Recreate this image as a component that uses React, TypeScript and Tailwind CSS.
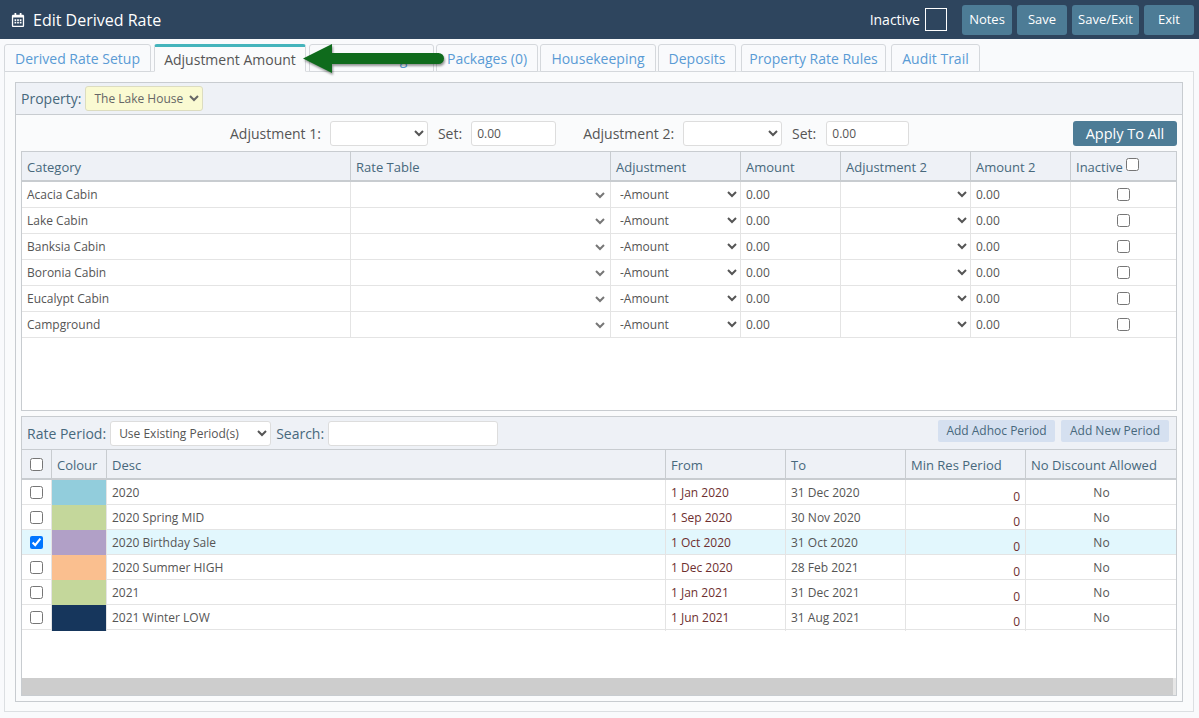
import { FaRegCalendarAlt } from "react-icons/fa";

const FONT = "font-['Open_Sans',sans-serif]";

const tabs = [
  { label: "Derived Rate Setup", cls: "w-[147px]" },
  { label: "Adjustment Amount", cls: "ml-[3px] w-[152px]", active: true },
  { label: "Rate Settings", cls: "ml-[3px] w-[125px]" },
  { label: "Packages (0)", cls: "ml-[2px] w-[102px]" },
  { label: "Housekeeping", cls: "ml-[2px] w-[116px]" },
  { label: "Deposits", cls: "ml-[2px] w-[78px]" },
  { label: "Property Rate Rules", cls: "ml-[5px] w-[145px]" },
  { label: "Audit Trail", cls: "ml-[5px] w-[89px]" },
];

const categories = ["Acacia Cabin", "Lake Cabin", "Banksia Cabin", "Boronia Cabin", "Eucalypt Cabin", "Campground"];

const periods = [
  { desc: "2020", colour: "bg-[#92cddc]", from: "1 Jan 2020", to: "31 Dec 2020" },
  { desc: "2020 Spring MID", colour: "bg-[#c4d79b]", from: "1 Sep 2020", to: "30 Nov 2020" },
  { desc: "2020 Birthday Sale", colour: "bg-[#b1a0c7]", from: "1 Oct 2020", to: "31 Oct 2020", selected: true },
  { desc: "2020 Summer HIGH", colour: "bg-[#fabf8f]", from: "1 Dec 2020", to: "28 Feb 2021" },
  { desc: "2021", colour: "bg-[#c4d79b]", from: "1 Jan 2021", to: "31 Dec 2021" },
  { desc: "2021 Winter LOW", colour: "bg-[#16365c]", from: "1 Jun 2021", to: "31 Aug 2021" },
];

const RATE_COLS = "grid grid-cols-[329px_260px_130px_100px_130px_100px_106px]";
const PERIOD_COLS = "grid grid-cols-[30px_55px_559px_120px_120px_120px_151px]";

function HeaderCell({ children }: { children?: React.ReactNode }) {
  return (
    <div className="flex items-center border-r border-[#c8ccd0] pl-[5px] pt-[4px] text-[#47687c] last:border-r-0">
      {children}
    </div>
  );
}

function TopButton({ label, w }: { label: string; w: string }) {
  return (
    <button className={`h-[30px] ${w} rounded-[3px] bg-[#4d7c96] text-[13px] text-white`}>
      {label}
    </button>
  );
}

function Arrow() {
  // annotation drawn over the tab strip
  return (
    <svg className="absolute left-[302px] top-[43px]" width="146" height="36" viewBox="0 0 146 36">
      <path
        d="M1 15.5 L30 1 L30 10 L136.5 10 A5.5 5.5 0 0 1 136.5 21 L30 21 L30 30 Z"
        fill="#0f6b1c"
        className="drop-shadow-[1px_2px_1px_rgba(0,0,0,0.4)]"
      />
    </svg>
  );
}

export default function App() {
  return (
    <div className={`${FONT} relative h-[718px] w-[1199px] overflow-hidden bg-[#f9fafc] text-[13px] text-[#555]`}>
      {/* TOP BAR */}
      <header className="flex h-[39px] items-center bg-[#2e455e] pl-[11px] pr-[5px] text-white">
        <FaRegCalendarAlt size={14} />
        <h1 className="ml-2 text-[16px]">Edit Derived Rate</h1>
        <span className="ml-auto text-[14px]">Inactive</span>
        <span className="ml-[5px] mr-[15px] h-[23px] w-[22px] border border-white" />
        <div className="flex gap-[5px]">
          <TopButton label="Notes" w="w-[50px]" />
          <TopButton label="Save" w="w-[50px]" />
          <TopButton label="Save/Exit" w="w-[67px]" />
          <TopButton label="Exit" w="w-[50px]" />
        </div>
      </header>

      {/* TABS */}
      <nav className="flex pl-[4px] pt-[5px] text-[14px]">
        {tabs.map((tab) => (
          <div
            key={tab.label}
            className={`relative -mb-px flex h-[28px] items-center justify-center rounded-t-[3px] border border-[#d5d8dc] ${tab.cls} ${
              tab.active
                ? "border-b-[#fafbfc] border-t-[3px] border-t-[#44b4bc] bg-[#fafbfc] text-[#555]"
                : "bg-[#f9fafc] text-[#5a9bd5]"
            }`}
          >
            {tab.label}
          </div>
        ))}
      </nav>

      {/* OUTER PANEL */}
      <main className="ml-[4px] mr-[5px] h-[641px] border border-[#dcdfe2] bg-[#fafbfc] px-[10px] pt-[10px]">
        <div className="h-[620px] border border-[#c8ccd0]">
          <div className="flex h-[32px] items-center border-b border-[#c8ccd0] bg-[#eef1f6] pl-[5px]">
            <span className="text-[14px] text-[#47687c]">Property:</span>
            <select className="ml-[4px] h-[25px] w-[118px] rounded-[3px] border border-[#dcdcc0] bg-[#fafad2] pl-[4px] text-[12px] text-[#666]">
              <option>The Lake House</option>
            </select>
          </div>

          <div className="relative flex h-[36px] items-center pl-[214px]">
            <span className="text-[14px]">Adjustment 1:</span>
            <select className="ml-[9px] h-[25px] w-[98px] rounded-[3px] border border-[#ddd] bg-white" />
            <span className="ml-[10px] text-[14px]">Set:</span>
            <input
              readOnly
              value="0.00"
              className="ml-[9px] h-[25px] w-[85px] rounded-[3px] border border-[#ddd] bg-white pl-[5px] text-[12px]"
            />
            <span className="ml-[27px] text-[14px]">Adjustment 2:</span>
            <select className="ml-[9px] h-[25px] w-[99px] rounded-[3px] border border-[#ddd] bg-white" />
            <span className="ml-[10px] text-[14px]">Set:</span>
            <input
              readOnly
              value="0.00"
              className="ml-[10px] h-[25px] w-[83px] rounded-[3px] border border-[#ddd] bg-white pl-[5px] text-[12px]"
            />
            <button className="ml-auto mr-[5px] mt-[1px] h-[25px] w-[104px] rounded-[3px] bg-[#4d7c96] text-[14.5px] text-white">
              Apply To All
            </button>
          </div>

          {/* RATE TABLE */}
          <section className="mx-[5px] h-[260px] border border-[#c8ccd0] bg-white">
            <div className={`${RATE_COLS} h-[30px] border-b-2 border-[#c8ccd0] bg-[#eef1f6]`}>
              <HeaderCell>Category</HeaderCell>
              <HeaderCell>Rate Table</HeaderCell>
              <HeaderCell>Adjustment</HeaderCell>
              <HeaderCell>Amount</HeaderCell>
              <HeaderCell>Adjustment 2</HeaderCell>
              <HeaderCell>Amount 2</HeaderCell>
              <HeaderCell>
                Inactive
                <input type="checkbox" className="mb-[7px] ml-[3px]" />
              </HeaderCell>
            </div>
            {categories.map((name) => (
              <div key={name} className={`${RATE_COLS} h-[26px] border-b border-[#e4e4e4] text-[12px]`}>
                <div className="flex items-center border-r border-[#e4e4e4] pl-[5px]">{name}</div>
                <div className="flex items-center border-r border-[#e4e4e4] pr-[2px] pt-[2px]">
                  <select className="h-full w-full bg-transparent text-[#777]" />
                </div>
                <div className="flex items-center border-r border-[#e4e4e4] pl-[5px]">
                  <select className="h-full w-full bg-transparent">
                    <option>-Amount</option>
                  </select>
                </div>
                <div className="flex items-center border-r border-[#e4e4e4] pl-[5px]">0.00</div>
                <div className="flex items-center border-r border-[#e4e4e4]">
                  <select className="h-full w-full bg-transparent" />
                </div>
                <div className="flex items-center border-r border-[#e4e4e4] pl-[5px]">0.00</div>
                <div className="flex items-center justify-center pr-[2px]">
                  <input type="checkbox" />
                </div>
              </div>
            ))}
          </section>

          {/* RATE PERIODS */}
          <section className="relative mx-[5px] mt-[5px] flex h-[280px] flex-col border border-[#c8ccd0] bg-white">
            <div className="flex h-[33px] items-center border-b border-[#c8ccd0] bg-[#eef1f6] pl-[5px] pr-[7px]">
              <span className="text-[14px] text-[#47687c]">Rate Period:</span>
              <select className="ml-[4px] h-[25px] w-[161px] rounded-[3px] border border-[#ddd] bg-white pl-[4px] text-[12px]">
                <option>Use Existing Period(s)</option>
              </select>
              <span className="ml-[5px] text-[14px] text-[#47687c]">Search:</span>
              <input readOnly className="ml-[4px] h-[25px] w-[170px] rounded-[3px] border border-[#ddd] bg-white" />
              <div className="mb-[5px] ml-auto flex gap-[6px] text-[12px] text-[#47687c]">
                <span className="flex h-[22px] w-[117px] items-center justify-center rounded-[2px] bg-[#d5e0f0]">Add Adhoc Period</span>
                <span className="flex h-[22px] w-[108px] items-center justify-center rounded-[2px] bg-[#d5e0f0]">Add New Period</span>
              </div>
            </div>
            <div className={`${PERIOD_COLS} h-[30px] border-b-2 border-[#c8ccd0] bg-[#eef1f6]`}>
              <div className="flex items-center justify-center border-r border-[#c8ccd0]">
                <input type="checkbox" />
              </div>
              <HeaderCell>Colour</HeaderCell>
              <HeaderCell>Desc</HeaderCell>
              <HeaderCell>From</HeaderCell>
              <HeaderCell>To</HeaderCell>
              <HeaderCell>Min Res Period</HeaderCell>
              <HeaderCell>No Discount Allowed</HeaderCell>
            </div>
            {periods.map((p) => (
              <div
                key={p.desc}
                className={`${PERIOD_COLS} h-[25px] border-b border-[#e4e4e4] text-[12px] ${p.selected ? "bg-[#e2f7fd]" : ""}`}
              >
                <div className="flex items-center justify-center border-r border-[#e4e4e4] pb-[2px]">
                  <input type="checkbox" readOnly checked={!!p.selected} />
                </div>
                <div className={`border-r border-[#e4e4e4] ${p.colour}`} />
                <div className="flex items-center border-r border-[#e4e4e4] pl-[5px]">{p.desc}</div>
                <div className="flex items-center border-r border-[#e4e4e4] pl-[5px] text-[#6e2f2f]">{p.from}</div>
                <div className="flex items-center border-r border-[#e4e4e4] pl-[5px]">{p.to}</div>
                <div className="flex items-center justify-end border-r border-[#e4e4e4] pr-[5px] pt-[8px] text-[#6e2f2f]">0</div>
                <div className="flex items-center justify-center">No</div>
              </div>
            ))}
            <div className="absolute bottom-0 left-0 right-0 flex h-[17px] bg-[#cdcdcd]">
              <div className="ml-auto w-[3px] bg-[#e6e6e6]" />
            </div>
          </section>
        </div>
      </main>

      <Arrow />
    </div>
  );
}
